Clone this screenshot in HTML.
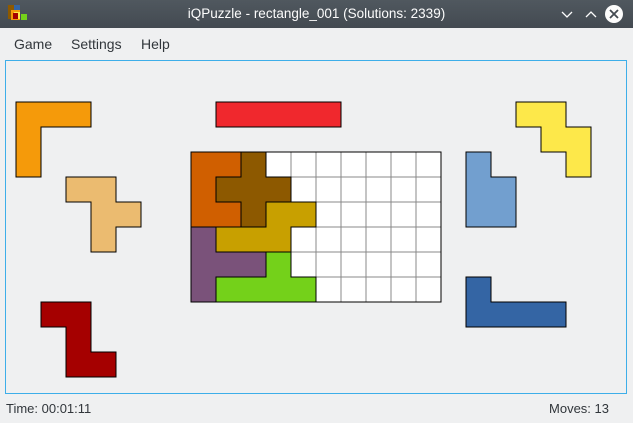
<!DOCTYPE html><html><head><style>
body{margin:0;width:633px;height:423px;background:#eff0f1;font-family:"Liberation Sans",sans-serif;position:relative;overflow:hidden}
.tb{position:absolute;left:0;top:0;width:633px;height:28px;background:linear-gradient(#50585f,#434a51);color:#fcfcfc;font-size:13.5px;text-align:center;line-height:28px}
.menu{position:absolute;top:36px;font-size:14px;color:#31363b}
.st{position:absolute;top:401px;font-size:13px;color:#31363b}
</style></head><body>
<div class="tb">iQPuzzle - rectangle_001 (Solutions: 2339)</div>
<svg style="position:absolute;left:0;top:0" width="633" height="423">
<rect x="8" y="5" width="6" height="14" fill="#8d5900"/><rect x="14" y="5" width="6" height="5" fill="#3465a4"/>
<rect x="11" y="10" width="9" height="10" fill="#f59a0a"/><rect x="14" y="12" width="6" height="7" fill="#fde84a"/><rect x="13" y="13" width="5" height="6" fill="#a50000"/><rect x="21" y="14" width="6" height="6" fill="#74d11a"/>
<path d="M562 12l5 5 5-5M586 17l5-5 5 5" stroke="#fcfcfc" stroke-width="1.3" fill="none"/>
<circle cx="614" cy="14" r="9" fill="#fcfcfc"/><path d="M610 10l8 8M618 10l-8 8" stroke="#434a51" stroke-width="1.8"/>
<rect x="5.5" y="60.5" width="621" height="333" fill="none" stroke="#3daee9"/>
<g stroke="#888" stroke-width="1">
<rect x="191" y="152" width="250" height="150" fill="#fff"/>
<path d="M216 152v150M241 152v150M266 152v150M291 152v150M316 152v150M341 152v150M366 152v150M391 152v150M416 152v150M191 177h250M191 202h250M191 227h250M191 252h250M191 277h250"/>
</g>
<g stroke="#000" stroke-width="1">
<rect x="191" y="152" width="250" height="150" fill="none" stroke="#000"/>
<polygon fill="#d05f00" points="191,152 241,152 241,177 216,177 216,202 241,202 241,227 191,227"/>
<polygon fill="#8d5900" points="241,152 266,152 266,177 291,177 291,202 266,202 266,227 241,227 241,202 216,202 216,177 241,177"/>
<polygon fill="#c8a000" points="266,202 316,202 316,227 291,227 291,252 216,252 216,227 266,227"/>
<polygon fill="#7a527a" points="191,227 216,227 216,252 266,252 266,277 216,277 216,302 191,302"/>
<polygon fill="#74d11a" points="266,252 291,252 291,277 316,277 316,302 216,302 216,277 266,277"/>
<polygon fill="#f59a0a" points="16,102 91,102 91,127 41,127 41,177 16,177"/>
<polygon fill="#ebbb70" points="66,177 116,177 116,202 141,202 141,227 116,227 116,252 91,252 91,202 66,202"/>
<rect fill="#f0282d" x="216" y="102" width="125" height="25"/>
<polygon fill="#a50000" points="41,302 91,302 91,352 116,352 116,377 66,377 66,327 41,327"/>
<polygon fill="#fde84a" points="516,102 566,102 566,127 591,127 591,177 566,177 566,152 541,152 541,127 516,127"/>
<polygon fill="#729fcf" points="466,152 491,152 491,177 516,177 516,227 466,227"/>
<polygon fill="#3465a4" points="466,277 491,277 491,302 566,302 566,327 466,327"/>
</g>
</svg>
<div class="menu" style="left:14px">Game</div>
<div class="menu" style="left:71px">Settings</div>
<div class="menu" style="left:141px">Help</div>
<div class="st" style="left:6px">Time: 00:01:11</div>
<div class="st" style="right:24px">Moves: 13</div>
</body></html>
